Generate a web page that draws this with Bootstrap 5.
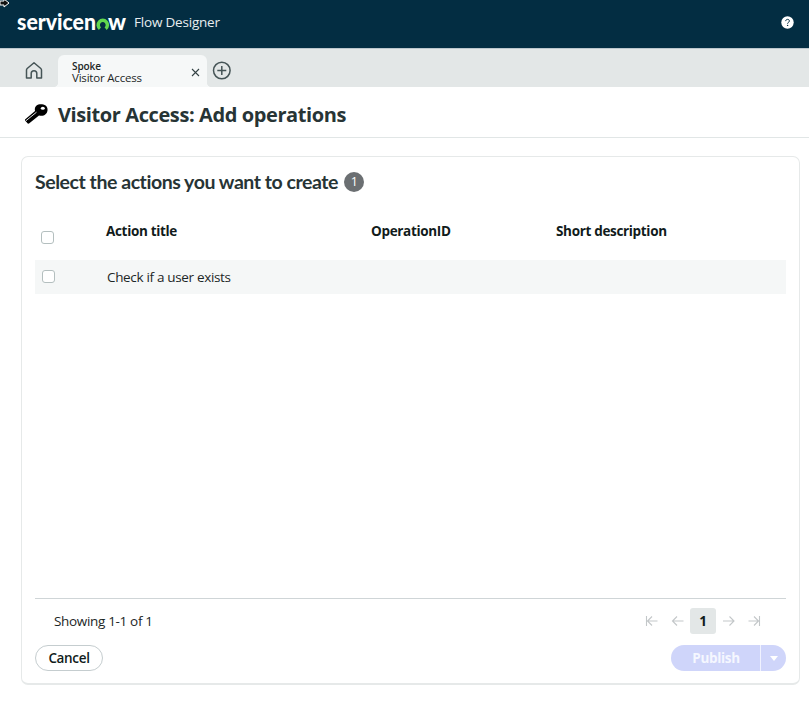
<!DOCTYPE html>
<html lang="en">
<head>
<meta charset="utf-8">
<meta name="viewport" content="width=device-width, initial-scale=1">
<title>Flow Designer</title>
<link href="https://cdn.jsdelivr.net/npm/bootstrap@5.3.0/dist/css/bootstrap.min.css" rel="stylesheet">
<style>
body{font-family:"Open Sans","Noto Sans",sans-serif;font-size:13.5px;letter-spacing:-.33px;line-height:18px;color:#1c2626;height:701px;overflow:hidden;background:#fff}
svg{display:block;flex:none}
.topbar{height:48px;background:#032d42;padding:0 15px 3px 17px}
.cursor-mark{left:0;top:0}
.product{font-size:13.5px;color:#e8edf0;letter-spacing:-.2px;font-weight:500;padding:0 0 1px 6px}
.tabstrip{height:39px;background:#e3e7e7;border-top:1px solid #bcc7cd;padding-left:25px}
.tab-open{width:149px;height:32px;background:#f6f8f8;border-radius:6px 6px 0 0;padding:2px 7px 0 14px;margin-left:15px;font-size:11.5px;letter-spacing:-.2px}
.tab-open::before,.tab-open::after{content:"";position:absolute;bottom:0;width:5px;height:5px}
.tab-open::before{left:-5px;background:radial-gradient(circle at 0 0,transparent 5px,#f6f8f8 5.5px)}
.tab-open::after{right:-5px;background:radial-gradient(circle at 100% 0,transparent 5px,#f6f8f8 5.5px)}
.tab-open small{font-size:10px;font-weight:600;line-height:12px;letter-spacing:-.1px}
.tab-open span{line-height:12px}
.page-head{height:51px;border-bottom:1px solid #e1e6e6;padding:6px 0 0 24px}
.page-head h1{font-size:20px;font-weight:700;color:#273435;margin:0 0 0 10px;line-height:28px;letter-spacing:-.4px}
.panel{margin:18px 9px 0 21px;height:529px;border:1px solid #e6e9e9;border-bottom-width:2px;border-radius:7px;padding:0 13px}
.panel h2{font-family:Lato,sans-serif;font-size:19.5px;font-weight:700;line-height:26px;letter-spacing:-.45px;font-variant-ligatures:none;margin:0;color:#273435}
.panel-head{height:50px}
.count{width:20px;height:20px;background:#6b6f72;color:#fff;font-size:12.5px;margin-left:6px}
.grid-row{display:grid;grid-template-columns:71px 265px 185px 1fr}
.grid-head{height:53px;padding-top:15px;font-weight:700;color:#111b1b}
.head-pick{padding-top:9px}
.grid-item{height:34px;background:#f5f7f7}
.form-check-input.pick{width:13px;height:13px;border:1px solid #b4bfbf;border-radius:3px;margin:0 0 0 6px;display:block}
.grid-item .form-check-input.pick{margin:0 0 1px 7px}
.item-name{padding:0 0 1px 1px}
.pager-line{border-top:1px solid #cfd5d7;height:47px;padding-bottom:3px}
.page-now{width:26px;height:26px;background:#e3e7e7;border-radius:3px;font-weight:700;color:#111b1b}
.pill{height:26px;border-radius:13px;font-size:13.5px;font-weight:600;line-height:18px;padding:0;letter-spacing:-.33px}
.pill-cancel{width:68px;border:1px solid #c5cdcf;color:#111b1b}
.pill-publish{background:#cfd5fa!important;color:#f5f7ff!important;border:0;opacity:1!important;font-weight:700}
.actions{padding-bottom:12px}
.showing{padding-left:19px}
.pager{padding-right:25px}
.publish-main{width:90px}
.btn-group>.btn.publish-more{width:26px;margin-left:0;border-left:1px solid #f0f2ff}
</style>
</head>
<body>
<header class="topbar d-flex align-items-center position-relative">
  <svg class="cursor-mark position-absolute" width="10" height="8" viewBox="0 0 10 8"><path d="M0 1h4V-1L9 3 4 7V5H0Z" fill="#111" stroke="#fff"/></svg>
  <svg width="111" height="36" viewBox="0 -6 111 36" role="img" aria-label="servicenow">
    <g font-family="Lato" font-weight="900" font-size="22" letter-spacing="0" fill="#fff"><text x="0" y="18.500" textLength="79" lengthAdjust="spacingAndGlyphs">servicen</text><text x="91" y="18.500" textLength="18" lengthAdjust="spacingAndGlyphs">w</text></g>
    <path d="M83 17.600A4.600 4.600 0 1 1 88.600 17.600" fill="none" stroke="#62d84e" stroke-width="3.500"/>
  </svg>
  <span class="product flex-grow-1">Flow Designer</span>
  <svg width="13" height="13" viewBox="0 0 13 13"><circle cx="6.5" cy="6.5" r="6.2" fill="#fff"/><path d="M4.7 5.1C4.7 2.8 8.4 2.8 8.4 5 8.4 6.4 6.6 6.2 6.6 7.7" fill="none" stroke="#032d42"/><circle cx="6.6" cy="9.4" r=".7" fill="#032d42"/></svg>
</header>
<nav class="tabstrip d-flex align-items-end">
  <svg class="mb-2" width="18" height="18" viewBox="0 0 18 18" fill="none" stroke="#455456" stroke-width="1.5" stroke-linejoin="round"><path d="M1.5 9a2 2 0 0 1 .7-1.5L9 1.8l6.8 5.7a2 2 0 0 1 .7 1.5v8h-4.7v-4.4a2.8 2.8 0 0 0-5.6 0V17H1.5Z"/></svg>
  <div class="tab-open position-relative d-flex align-items-center justify-content-between">
    <div class="d-flex flex-column"><small>Spoke</small><span>Visitor Access</span></div>
    <svg width="9" height="9" viewBox="0 0 9 9"><path d="m1 1 7 7m0-7L1 8" stroke="#344244" stroke-width="1.1"/></svg>
  </div>
  <svg class="ms-1" width="21" height="26" viewBox="0 0 21 26" fill="none" stroke="#455456" stroke-width="1.5"><circle cx="10.8" cy="9.5" r="8.3"/><path d="M10.8 5v9M6.3 9.5h9"/></svg>
</nav>
<div class="page-head d-flex align-items-center">
  <svg width="24" height="24" viewBox="0 0 24 24"><path d="M11 8C10 2.5 14 1 18 1.300c4 .3 6 3 5.500 6.200-.5 3.800-4 6.300-8.500 5L5 20.500 4 20.800 1 17.500V16.500Z"/><path d="M1.600 18 12.500 9.200" stroke="#fff" stroke-width=".9"/><ellipse cx="18.800" cy="5.200" rx="2" ry="1.500" fill="#fff"/></svg>
  <h1>Visitor Access: Add operations</h1>
</div>
<main class="panel d-flex flex-column">
  <div class="panel-head d-flex align-items-center"><h2>Select the actions you want to create</h2><span class="count rounded-circle d-flex align-items-center justify-content-center">1</span></div>
  <div class="grid-row grid-head"><div class="head-pick"><input class="form-check-input pick" type="checkbox" aria-label="Select all"></div><div>Action title</div><div>OperationID</div><div>Short description</div></div>
  <div class="grid-row grid-item align-items-center"><div><input class="form-check-input pick" type="checkbox" aria-label="Select action"></div><div class="item-name">Check if a user exists</div></div>
  <div class="pager-line mt-auto d-flex align-items-center justify-content-between">
    <span class="showing">Showing 1-1 of 1</span>
    <div class="pager d-flex align-items-center">
      <svg width="45" height="14" viewBox="0 0 45 14" fill="none" stroke="#c3c7c9" stroke-width="1.1"><path d="M1.5 2v10M2.5 7h10M7 2.5 2.5 7 7 11.500M27.500 7h11M32 2.500 27.500 7l4.500 4.500"/></svg>
      <span class="page-now d-flex align-items-center justify-content-center">1</span>
      <svg width="45" height="14" viewBox="0 0 45 14" fill="none" stroke="#c3c7c9" stroke-width="1.1"><path d="M7 7h11M13.500 2.500 18 7l-4.500 4.500M32.500 7h10M38 2.500 42.500 7 38 11.500M43.500 2v10"/></svg>
    </div>
  </div>
  <div class="actions d-flex justify-content-between">
    <button class="btn pill pill-cancel">Cancel</button>
    <div class="btn-group"><button class="btn pill pill-publish publish-main" disabled>Publish</button><button class="btn pill pill-publish publish-more d-flex align-items-center justify-content-center" disabled aria-label="More"><svg width="8" height="5" viewBox="0 0 8 5"><path d="M0 0h8L4 5Z" fill="#fff"/></svg></button></div>
  </div>
</main>
</body>
</html>
